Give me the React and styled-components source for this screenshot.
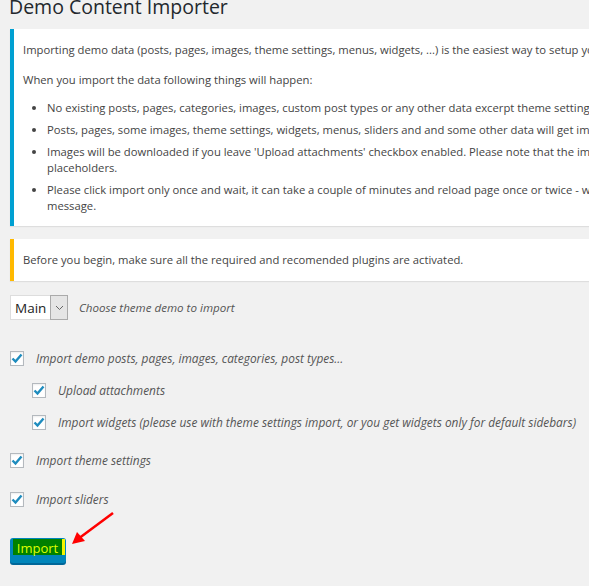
import React from 'react'
import styled, { createGlobalStyle } from 'styled-components';

const Global = createGlobalStyle`
html, body {
  margin: 0;
  padding: 0;
  background: #f1f1f1;
  overflow: hidden;
}
body {
  font-family: "Open Sans", "Noto Sans", sans-serif;
  font-size: 11.25px;
  color: #444;
}`;

const Page = styled.div`
position: relative;
width: 589px;
height: 586px;
overflow: hidden;
padding-left: 10px;
box-sizing: border-box;`;

const Title = styled.h1`
margin: -7px 0 0 -1px;
font-size: 19.5px;
font-weight: 400;
line-height: 28px;
color: #23282d;
white-space: nowrap;`;

const Notice = styled.div`
background: #fff;
border-left: 4px solid ${({ $tone }) => $tone};
box-shadow: 0 1px 1px rgba(0, 0, 0, 0.08);
width: 640px;
box-sizing: border-box;
padding: ${({ $pad }) => $pad};
margin-top: ${({ $top }) => $top}px;
white-space: nowrap;`;

const Para = styled.p`
margin: 0 0 ${({ $after }) => $after}px;
line-height: 16px;`;

const List = styled.ul`
margin: 0;
padding-left: 24px;
list-style: disc;`;

const Item = styled.li`
line-height: 16px;
margin-bottom: 6px;`;

const ChooseRow = styled.div`
display: flex;
align-items: center;
gap: 11px;
margin-top: 14px;
height: 25px;`;

const Select = styled.div`
display: flex;
height: 25px;
width: 58px;
box-sizing: border-box;
border: 1px solid #ddd;
background: #fff;`;

const SelectValue = styled.div`
flex: 1;
display: flex;
align-items: center;
padding-left: 4px;
font-size: 13.5px;
color: #222;`;

const SelectArrow = styled.div`
width: 16px;
display: flex;
align-items: center;
justify-content: center;
background: #e5e5e5;
border: 1px solid #aaa;
margin: -1px -1px -1px 0;`;

const Hint = styled.span`
font-style: italic;
font-size: 11.6px;
color: #555;`;

const Options = styled.div`
margin-top: 28px;`;

const Row = styled.div`
display: flex;
align-items: center;
height: 20px;
margin-top: ${({ $top }) => $top || 0}px;
padding-left: ${({ $indent }) => ($indent ? 22 : 0)}px;
gap: 12px;`;

const Box = styled.span`
width: 14px;
height: 15px;
box-sizing: border-box;
border: 1px solid #b4b9be;
background: #fff;
box-shadow: inset 0 1px 2px rgba(0, 0, 0, 0.07);
display: flex;
align-items: center;
justify-content: center;
flex: none;`;

const Label = styled.span`
font-style: italic;
font-size: 11.9px;
color: #555;
white-space: nowrap;`;

const Button = styled.button`
margin-top: 29px;
width: 56px;
height: 25px;
padding: 1px 1px 0 3px;
border: none;
border-radius: 3px;
background: #0085ba;
box-shadow: 0 2px 0 #006799;
display: flex;
align-items: flex-start;
box-sizing: border-box;
cursor: pointer;`;

const Highlight = styled.span`
display: block;
width: 51px;
height: 13px;
padding-top: 3px;
background: #008000;
color: #dfff00;
font-family: "Open Sans", "Noto Sans", sans-serif;
font-size: 13px;
line-height: 13px;
text-align: center;
border-right: 3px solid #f5f500;
box-sizing: content-box;`;

const Arrow = styled.svg`
position: absolute;
left: 68px;
top: 508px;`;

const Check = () => (
  <svg width="12" height="11" viewBox="0 0 12 11">
    <path d="M1.5 5.5 L4.5 8.5 L10.5 1.5" fill="none" stroke="#1e8cbe" strokeWidth="2.4" />
  </svg>
);

const Option = ({ indent, top, children }) => (
  <Row $indent={indent} $top={top}>
    <Box><Check /></Box>
    <Label>{children}</Label>
  </Row>
);

export default function App() {
  return (
    <Page>
      <Global />
      <Title>Demo Content Importer</Title>
      <Notice $tone="#00a0d2" $top={8} $pad="13px 10px 6px 9px">
        <Para $after={14}>Importing demo data (posts, pages, images, theme settings, menus, widgets, ...) is the easiest way to setup your theme.</Para>
        <Para $after={12}>When you import the data following things will happen:</Para>
        <List>
          <Item>No existing posts, pages, categories, images, custom post types or any other data excerpt theme settings will be deleted or modified.</Item>
          <Item>Posts, pages, some images, theme settings, widgets, menus, sliders and and some other data will get imported.</Item>
          <Item>Images will be downloaded if you leave 'Upload attachments' checkbox enabled. Please note that the images might be<br />placeholders.</Item>
          <Item>Please click import only once and wait, it can take a couple of minutes and reload page once or twice - wait for success<br />message.</Item>
        </List>
      </Notice>
      <Notice $tone="#ffb900" $top={13} $pad="13px 10px 13px 9px">
        <Para $after={0}>Before you begin, make sure all the required and recomended plugins are activated.</Para>
      </Notice>
      <ChooseRow>
        <Select>
          <SelectValue>Main</SelectValue>
          <SelectArrow>
            <svg width="9" height="6" viewBox="0 0 9 6">
              <path d="M1 1 L4.5 4.5 L8 1" fill="none" stroke="#666" strokeWidth="1" />
            </svg>
          </SelectArrow>
        </Select>
        <Hint>Choose theme demo to import</Hint>
      </ChooseRow>
      <Options>
        <Option>Import demo posts, pages, images, categories, post types...</Option>
        <Option indent top={12}>Upload attachments</Option>
        <Option indent top={12}>Import widgets (please use with theme settings import, or you get widgets only for default sidebars)</Option>
        <Option top={18}>Import theme settings</Option>
        <Option top={19}>Import sliders</Option>
      </Options>
      <Button><Highlight>Import</Highlight></Button>
      <Arrow width="50" height="40" viewBox="0 0 50 40">
        <line x1="45" y1="5" x2="10" y2="31" stroke="#f00" strokeWidth="2.5" />
        <polygon points="4,36 9,24 17,33" fill="#f00" />
      </Arrow>
    </Page>
  );
}
